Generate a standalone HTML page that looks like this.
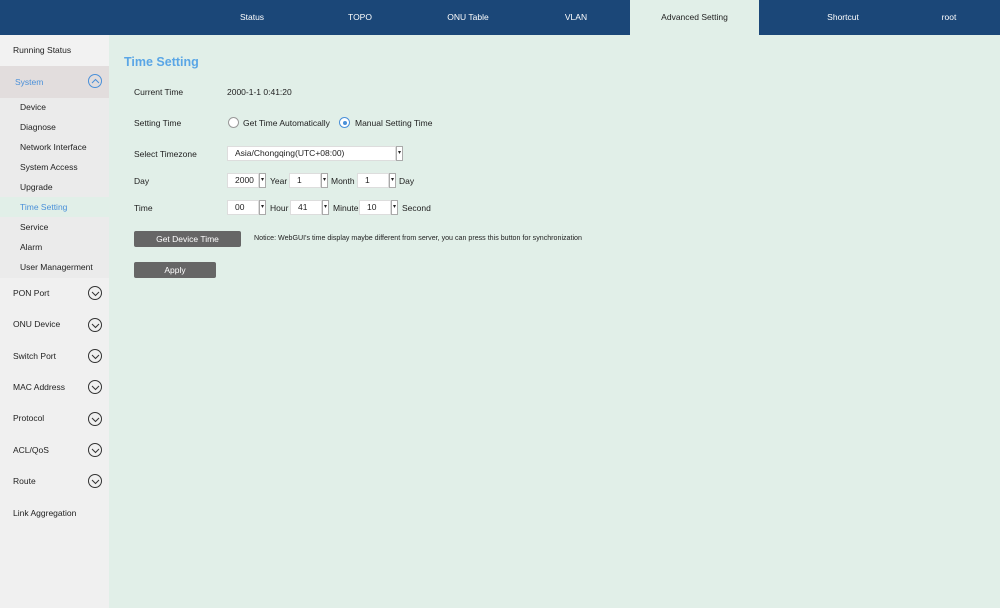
<!DOCTYPE html>
<html><head><meta charset="utf-8"><style>
*{margin:0;padding:0;box-sizing:border-box}
body{width:1000px;height:608px;overflow:hidden;font-family:"Liberation Sans",Arial,sans-serif;font-size:8.5px;color:#222;background:#e1efe8;position:relative}
.hdr{position:absolute;left:0;top:0;width:1000px;height:35px;background:#1b4778}
.hdr span{position:absolute;top:0;line-height:35px;color:#fff;font-size:8.5px;transform:translateX(-50%)}
.hdr .act{background:#e1efe8;color:#222;left:630px;width:129px;transform:none;text-align:center}
.side{position:absolute;left:0;top:35px;width:109px;height:573px;background:#f0f0f0}
.side div{position:absolute;left:0;width:109px}
.ic{position:absolute;left:88px;width:14px;height:14px;border:1px solid #333;border-radius:50%}
.ic svg{position:absolute;left:2px;top:2px}
.lbl{position:absolute;left:134px}
.box{position:absolute;height:15px;background:#fff;border:1px solid #ddd;padding-left:7px;line-height:13px}
.arr{position:absolute;width:7px;height:15px;background:#fff;border:1px solid #aaa;font-size:6px;text-align:center;line-height:13px}
.btn{position:absolute;background:#666;color:#fff;text-align:center;border-radius:2px}
.t{position:absolute}
</style></head><body>
<div class="hdr">
<span style="left:252px">Status</span>
<span style="left:360px">TOPO</span>
<span style="left:468px">ONU Table</span>
<span style="left:576px">VLAN</span>
<span class="act">Advanced Setting</span>
<span style="left:843px">Shortcut</span>
<span style="left:949px">root</span>
</div>
<div class="side">
<div style="top:0;height:31px;background:#f2f2f2;padding:10px 0 0 13px">Running Status</div>
<div style="top:31px;height:32px;background:#e2dddd;padding:11px 0 0 15px;color:#4a90d9">System<span class="ic" style="top:8px;border-color:#4a90d9"><svg width="9" height="9"><path d="M1 6 L4.5 2.5 L8 6" fill="none" stroke="#4a90d9" stroke-width="1"/></svg></span></div>
<div style="top:63px;height:180px;background:#ebebeb"></div>
<div style="top:67px;left:20px">Device</div>
<div style="top:87px;left:20px">Diagnose</div>
<div style="top:107px;left:20px">Network Interface</div>
<div style="top:127px;left:20px">System Access</div>
<div style="top:147px;left:20px">Upgrade</div>
<div style="top:162px;height:20px;background:#e1efe8"></div>
<div style="top:167px;left:20px;color:#4a90d9">Time Setting</div>
<div style="top:187px;left:20px">Service</div>
<div style="top:207px;left:20px">Alarm</div>
<div style="top:227px;left:20px">User Managerment</div>
<div style="top:253px;left:13px">PON Port</div>
<div style="top:284px;left:13px">ONU Device</div>
<div style="top:316px;left:13px">Switch Port</div>
<div style="top:347px;left:13px">MAC Address</div>
<div style="top:378px;left:13px">Protocol</div>
<div style="top:410px;left:13px">ACL/QoS</div>
<div style="top:441px;left:13px">Route</div>
<div style="top:473px;left:13px">Link Aggregation</div>
<span class="ic" style="top:251px"><svg width="9" height="9"><path d="M1 3 L4.5 6.5 L8 3" fill="none" stroke="#333"/></svg></span>
<span class="ic" style="top:283px"><svg width="9" height="9"><path d="M1 3 L4.5 6.5 L8 3" fill="none" stroke="#333"/></svg></span>
<span class="ic" style="top:314px"><svg width="9" height="9"><path d="M1 3 L4.5 6.5 L8 3" fill="none" stroke="#333"/></svg></span>
<span class="ic" style="top:345px"><svg width="9" height="9"><path d="M1 3 L4.5 6.5 L8 3" fill="none" stroke="#333"/></svg></span>
<span class="ic" style="top:377px"><svg width="9" height="9"><path d="M1 3 L4.5 6.5 L8 3" fill="none" stroke="#333"/></svg></span>
<span class="ic" style="top:408px"><svg width="9" height="9"><path d="M1 3 L4.5 6.5 L8 3" fill="none" stroke="#333"/></svg></span>
<span class="ic" style="top:439px"><svg width="9" height="9"><path d="M1 3 L4.5 6.5 L8 3" fill="none" stroke="#333"/></svg></span>
</div>
<div class="t" style="left:124px;top:55px;font-size:12.5px;font-weight:bold;color:#5aa6e6">Time Setting</div>
<div class="lbl" style="top:87px">Current Time</div><div class="t" style="left:227px;top:87px">2000-1-1 0:41:20</div>
<div class="lbl" style="top:118px">Setting Time</div>
<div class="t" style="left:228px;top:117px;width:11px;height:11px;border:1px solid #999;border-radius:50%;background:#fff"></div>
<div class="t" style="left:243px;top:118px">Get Time Automatically</div>
<div class="t" style="left:339px;top:117px;width:11px;height:11px;border:1px solid #4a90d9;border-radius:50%;background:#fff"><div style="position:absolute;left:2.5px;top:2.5px;width:4px;height:4px;border-radius:50%;background:#4a90d9"></div></div>
<div class="t" style="left:355px;top:118px">Manual Setting Time</div>
<div class="lbl" style="top:149px">Select Timezone</div>
<div class="box" style="left:227px;top:146px;width:169px">Asia/Chongqing(UTC+08:00)</div><div class="arr" style="left:396px;top:146px">▾</div>
<div class="lbl" style="top:176px">Day</div>
<div class="box" style="left:227px;top:173px;width:32px">2000</div><div class="arr" style="left:259px;top:173px">▾</div><div class="t" style="left:270px;top:176px">Year</div>
<div class="box" style="left:289px;top:173px;width:32px">1</div><div class="arr" style="left:321px;top:173px">▾</div><div class="t" style="left:331px;top:176px">Month</div>
<div class="box" style="left:357px;top:173px;width:32px">1</div><div class="arr" style="left:389px;top:173px">▾</div><div class="t" style="left:399px;top:176px">Day</div>
<div class="lbl" style="top:203px">Time</div>
<div class="box" style="left:227px;top:200px;width:32px">00</div><div class="arr" style="left:259px;top:200px">▾</div><div class="t" style="left:270px;top:203px">Hour</div>
<div class="box" style="left:290px;top:200px;width:32px">41</div><div class="arr" style="left:322px;top:200px">▾</div><div class="t" style="left:333px;top:203px">Minute</div>
<div class="box" style="left:359px;top:200px;width:32px">10</div><div class="arr" style="left:391px;top:200px">▾</div><div class="t" style="left:402px;top:203px">Second</div>
<div class="btn" style="left:134px;top:231px;width:107px;height:16px;line-height:16px">Get Device Time</div>
<div class="t" style="left:254px;top:234px;font-size:7.1px">Notice: WebGUI's time display maybe different from server, you can press this button for synchronization</div>
<div class="btn" style="left:134px;top:262px;width:82px;height:16px;line-height:16px">Apply</div>
</body></html>
